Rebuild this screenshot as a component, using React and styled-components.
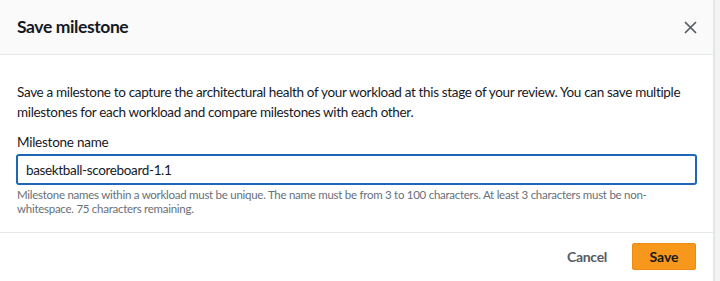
import React from "react";
import styled, { createGlobalStyle } from "styled-components";

const Global = createGlobalStyle`
  html, body { margin: 0; padding: 0; background: #ffffff; }
  body { font-family: "Lato", "Liberation Sans", sans-serif; color: #16191f; }
`;

const Page = styled.div`
  width: 720px;
  height: 281px;
  display: flex;
  background: #f2f3f3;
`;

const Dialog = styled.div`
  width: 715px;
  height: 281px;
  display: flex;
  flex-direction: column;
  background: #ffffff;
  border-right: 2px solid #e4e6e8;
  box-sizing: border-box;
`;

const Header = styled.div`
  height: 55px;
  box-sizing: border-box;
  background: #fafafa;
  border-bottom: 1px solid #e6e8ea;
  display: flex;
  align-items: center;
  justify-content: space-between;
  padding: 0 17px 0 17px;
`;

const Title = styled.h2`
  margin: 0;
  font-size: 17.5px;
  letter-spacing: -0.4px;
  font-weight: 700;
  line-height: 22px;
  color: #16191f;
`;

const CloseButton = styled.button`
  width: 20px;
  height: 20px;
  border: none;
  background: none;
  padding: 0;
  margin-right: -4px;
  display: flex;
  align-items: center;
  justify-content: center;
  cursor: pointer;
`;

const Body = styled.div`
  flex: 1;
  padding: 27px 17px 0 17px;
  box-sizing: border-box;
`;

const Intro = styled.p`
  margin: 0;
  font-size: 13.5px;
  letter-spacing: -0.33px;
  line-height: 20px;
  color: #16191f;
`;

const Label = styled.label`
  display: block;
  margin-top: 10px;
  font-size: 13.5px;
  letter-spacing: -0.25px;
  line-height: 20px;
`;

const Input = styled.input`
  display: block;
  width: 100%;
  box-sizing: border-box;
  margin-top: 3px;
  height: 29px;
  padding: 0 8px;
  border: 1px solid #1f66b8;
  box-shadow: 0 0 0 1px #1f66b8;
  border-radius: 2px;
  font-family: inherit;
  font-size: 13.5px;
  letter-spacing: -0.35px;
  color: #16191f;
  outline: none;
`;

const Helper = styled.div`
  margin-top: 4px;
  font-size: 11.5px;
  letter-spacing: -0.27px;
  line-height: 14px;
  color: #687078;
`;

const Footer = styled.div`
  height: 49px;
  box-sizing: border-box;
  border-top: 1px solid #e6e8ea;
  display: flex;
  align-items: center;
  justify-content: flex-end;
  gap: 25px;
  padding: 0 17px 2px 0;
`;

const TextButton = styled.button`
  border: none;
  background: none;
  font-family: inherit;
  font-size: 14px;
  font-weight: 700;
  letter-spacing: -0.3px;
  color: #545b64;
  padding: 0;
  cursor: pointer;
`;

const PrimaryButton = styled.button`
  width: 64px;
  height: 27px;
  border: 1px solid #ec8a12;
  border-radius: 2px;
  background: #f7981d;
  font-family: inherit;
  font-size: 14px;
  font-weight: 700;
  color: #16191f;
  cursor: pointer;
`;

export default function App() {
  return (
    <Page>
      <Global />
      <Dialog>
        <Header>
          <Title>Save milestone</Title>
          <CloseButton aria-label="Close">
            <svg width="13" height="13" viewBox="0 0 13 13">
              <path d="M1 1L12 12M12 1L1 12" stroke="#545b64" strokeWidth="1.7" fill="none" />
            </svg>
          </CloseButton>
        </Header>
        <Body>
          <Intro>
            Save a milestone to capture the architectural health of your workload at this stage of your review. You can save multiple milestones for each workload and compare milestones with each other.
          </Intro>
          <Label htmlFor="ms">Milestone name</Label>
          <Input id="ms" defaultValue="basektball-scoreboard-1.1" />
          <Helper>
            Milestone names within a workload must be unique. The name must be from 3 to 100 characters. At least 3 characters must be non-whitespace. 75 characters remaining.
          </Helper>
        </Body>
        <Footer>
          <TextButton>Cancel</TextButton>
          <PrimaryButton>Save</PrimaryButton>
        </Footer>
      </Dialog>
    </Page>
  );
}
